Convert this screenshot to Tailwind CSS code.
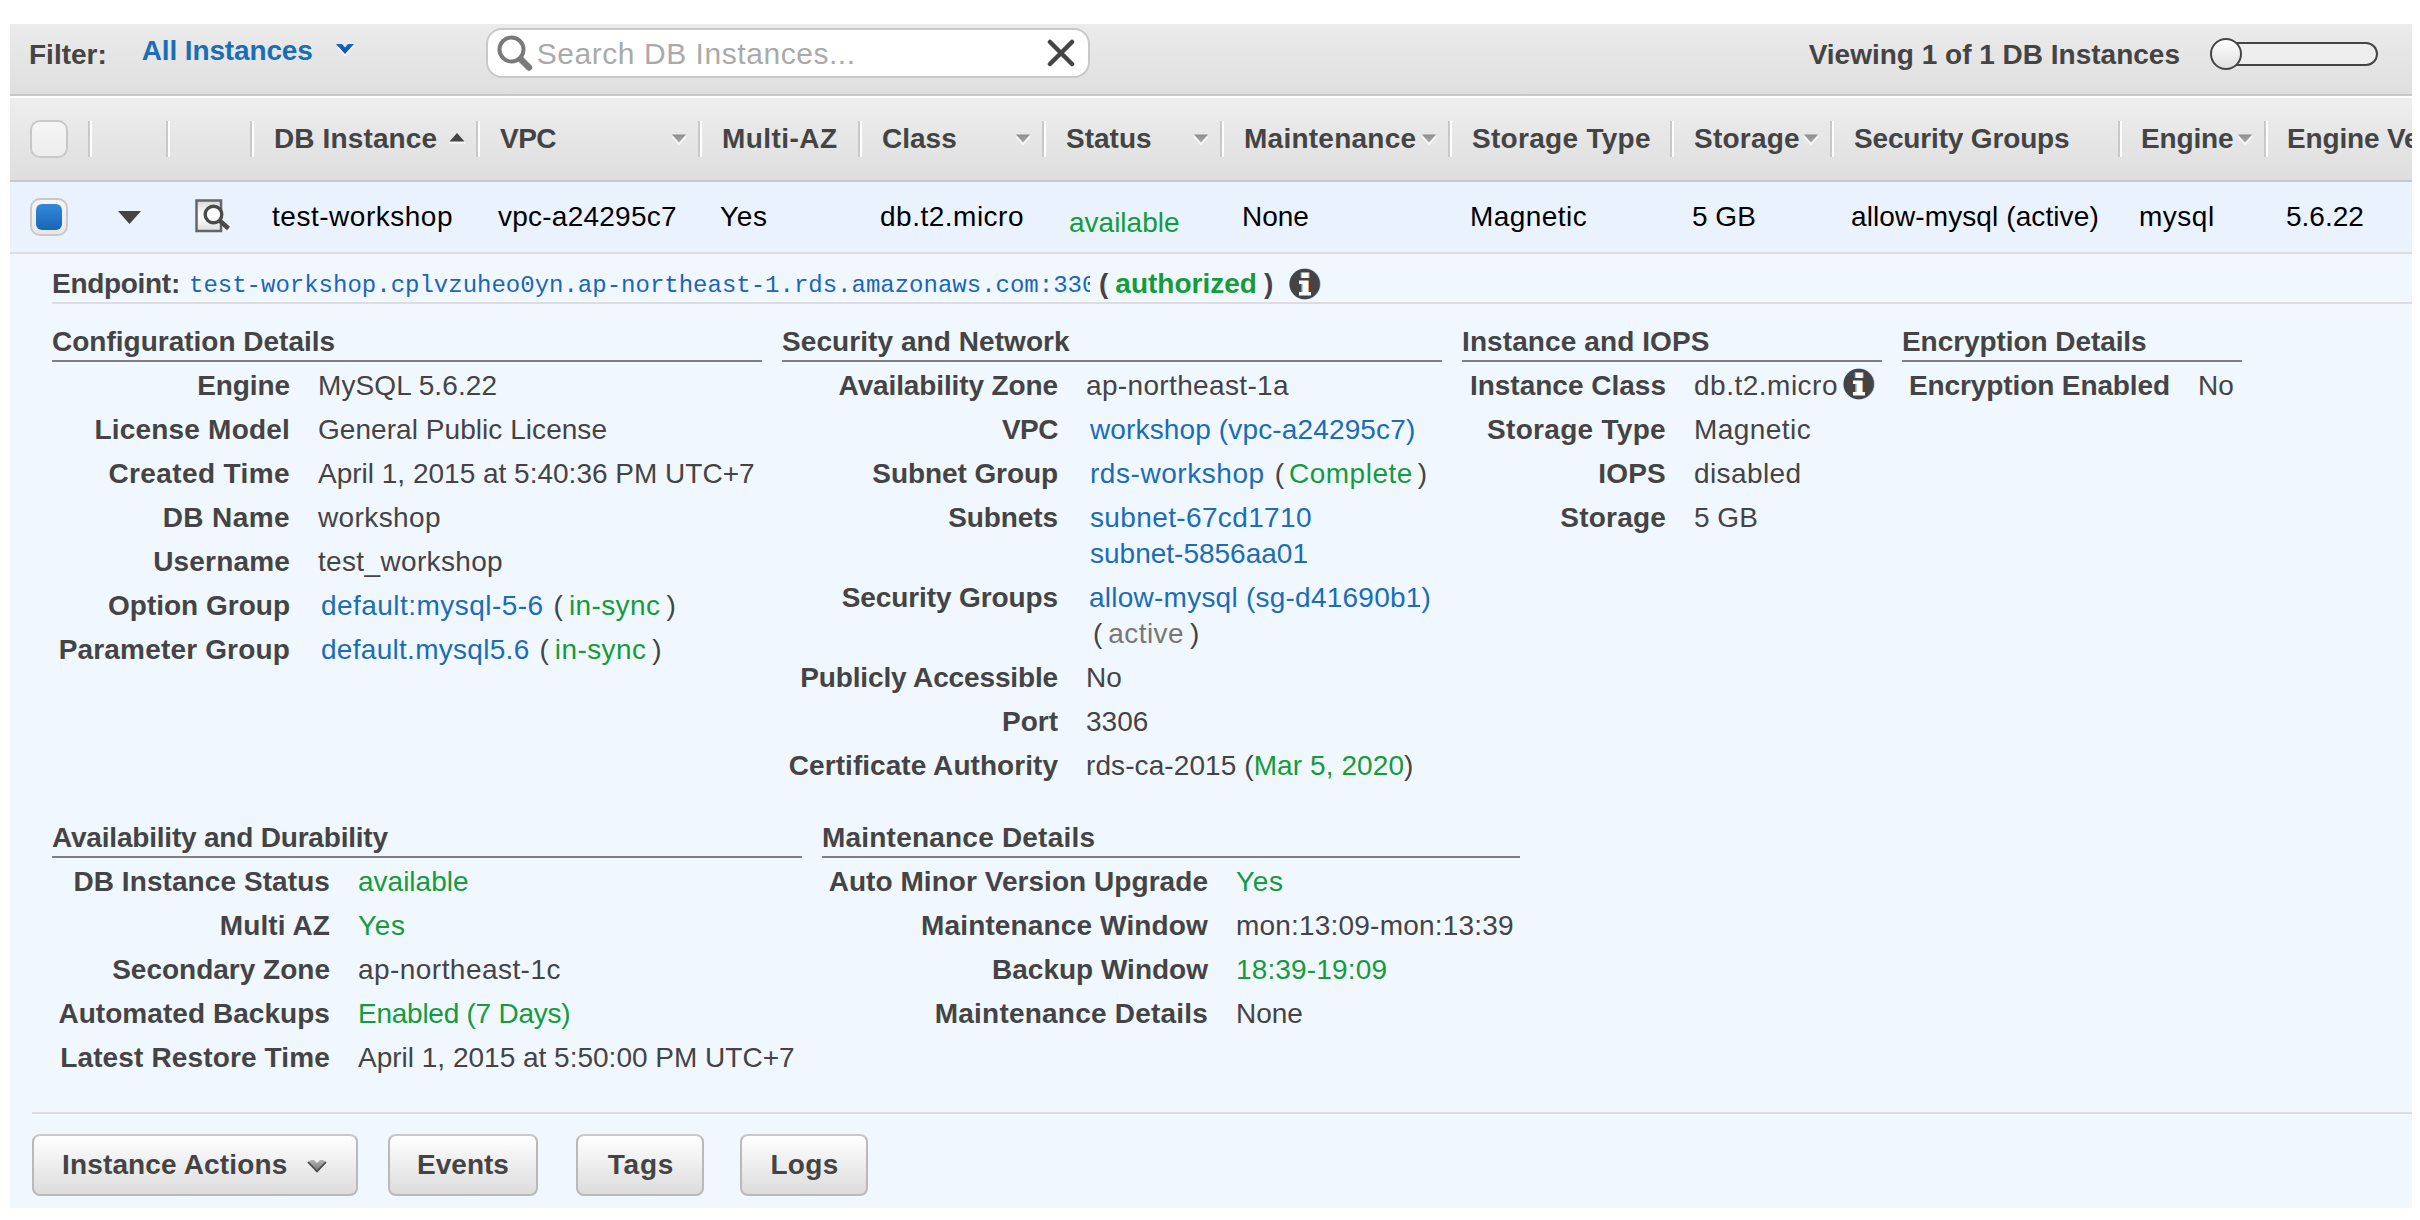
<!DOCTYPE html>
<html lang="en">
<head>
<meta charset="utf-8">
<title>DB Instances</title>
<script src="https://cdn.jsdelivr.net/npm/@tailwindcss/browser@4"></script>
</head>
<body class="bg-white overflow-hidden">
<svg class="absolute h-0 w-0">
  <defs>
    <linearGradient id="sortFill" x1="0" y1="0" x2="0" y2="1"><stop offset="0" stop-color="#8c8c8c"/><stop offset="1" stop-color="#a8a8a8"/></linearGradient>
    <linearGradient id="chevFill" x1="0" y1="0" x2="0" y2="1"><stop offset="0" stop-color="#b5b5b5"/><stop offset="1" stop-color="#6e6e6e"/></linearGradient>
    <linearGradient id="chevBlue" x1="0" y1="0" x2="0" y2="1"><stop offset="0" stop-color="#1467c4"/><stop offset="1" stop-color="#0a50b4"/></linearGradient>
    <linearGradient id="pageFill" x1="0" y1="0" x2="0" y2="1"><stop offset="0" stop-color="#d8d8d8"/><stop offset="0.5" stop-color="#ffffff"/><stop offset="1" stop-color="#dedede"/></linearGradient>
  </defs>
  <symbol id="sort" viewBox="0 0 16 12">
    <path d="M1 3.5 8 11 15 3.5" fill="none" stroke="#fafafa" stroke-width="1.600"/>
    <path d="M1 1.5H15L8 9.5Z" fill="url(#sortFill)"/>
  </symbol>
  <symbol id="info" viewBox="0 0 32 32">
    <circle cx="16" cy="16" r="15.6" fill="#8fb8e8"/>
    <circle cx="15.7" cy="16" r="15.2" fill="#444444"/>
    <path d="M12 4.5h8v5.500h-8zM10 12.500h9.500v11.500h2.500v3.500H10v-3.500h2.500v-8H10z" fill="#ffffff"/>
    <path d="M12 4.500v5.500M13 16v8" stroke="#4a90e2" stroke-width="1" fill="none"/>
    <path d="M20 4.500v5.500M19.500 13v11" stroke="#f0a560" stroke-width="1" fill="none"/>
  </symbol>
</svg>

<main class="ml-[10px] mt-6 flex h-[1184px] w-[2402px] flex-col overflow-hidden bg-[#f0f7ff] font-['Liberation_Sans',Arial,sans-serif] text-[28px] leading-9 whitespace-nowrap text-[#444]">

  <!-- Filter bar -->
  <header class="flex h-[72px] shrink-0 items-start border-b-2 border-[#c8c8c8] bg-linear-to-b from-[#ebebeb] to-[#dfdfdf]">
    <span class="mt-[13px] ml-[19px] font-bold">Filter:</span>
    <a class="mt-[9px] ml-[35px] font-bold tracking-[-0.14px] text-[#1b6db5]">All Instances</a>
    <svg class="mt-[19px] ml-[22px] h-[14px] w-5" viewBox="0 0 20 14"><path d="M1 3H7L10 6.500 13 3H19L10 13.500Z" fill="#fff"/><path d="M1 1H7L10 4.500 13 1H19L10 11Z" fill="url(#chevBlue)"/></svg>
    <div class="mt-1 ml-[131px] flex h-[50px] w-[604px] items-center rounded-[16px] border-2 border-[#c8c8c8] bg-white">
      <svg class="ml-[9px] h-9 w-9" viewBox="0 0 36 36" fill="none" stroke="#7a7a7a"><circle cx="14.500" cy="14.500" r="12" stroke-width="4"/><path d="M24 24.500 32 32.500" stroke-width="6.500" stroke-linecap="round"/></svg>
      <span class="ml-[4px] mt-[1px] text-[30px] tracking-[0.55px] text-[#aaa]">Search DB Instances...</span>
      <svg class="mr-[13px] ml-auto h-7 w-7" viewBox="0 0 28 28"><path d="M3 3 25 25M25 3 3 25" stroke="#444" stroke-width="4.500" stroke-linecap="round"/></svg>
    </div>
    <span class="mt-[13px] ml-auto font-bold">Viewing 1 of 1 DB Instances</span>
    <div class="mt-[14px] mr-[34px] ml-[30px] flex h-8 w-[168px] items-center">
      <span class="z-10 h-8 w-8 shrink-0 rounded-full border-2 border-[#444] bg-linear-to-b from-white to-[#e0e0e0]"></span>
      <span class="-ml-4 h-6 grow rounded-r-full border-2 border-[#444] bg-[#eeeeee]"></span>
    </div>
  </header>

  <!-- Column headings -->
  <div class="grid h-[86px] shrink-0 grid-cols-[78px_78px_84px_226px_222px_160px_184px_178px_228px_222px_160px_288px_146px_148px] items-center border-t-2 border-b-2 border-t-white border-b-[#c8c8c8] bg-linear-to-b from-[#eeeeee] to-[#dedede] font-bold">
    <div class="pl-5"><span class="block h-[38px] w-[38px] rounded-[10px] border-2 border-[#c8c8c8] bg-linear-to-b from-[#f6f6f6] to-[#ededed]"></span></div>
    <div class="flex h-9 border-l-2 border-[#c8c8c8]"><i class="w-[2px] bg-white"></i></div>
    <div class="flex h-9 border-l-2 border-[#c8c8c8]"><i class="w-[2px] bg-white"></i></div>
    <div class="flex h-9 border-l-2 border-[#c8c8c8]"><i class="w-[2px] bg-white"></i><span class="pl-[20px] tracking-[0.13px]">DB Instance</span><svg class="mt-[11px] mr-[11px] ml-auto h-3 w-4" viewBox="0 0 16 12"><path d="M0 9.500H16V11.500H0Z" fill="#fafafa"/><path d="M0.500 9.500 8 1 15.500 9.500Z" fill="#444"/></svg></div>
    <div class="flex h-9 border-l-2 border-[#c8c8c8]"><i class="w-[2px] bg-white"></i><span class="pl-5 tracking-[-0.5px]">VPC</span><svg class="mt-[12px] mr-[11px] ml-auto h-3 w-4"><use href="#sort"/></svg></div>
    <div class="flex h-9 border-l-2 border-[#c8c8c8]"><i class="w-[2px] bg-white"></i><span class="pl-[20px] tracking-[0.45px]">Multi-AZ</span></div>
    <div class="flex h-9 border-l-2 border-[#c8c8c8]"><i class="w-[2px] bg-white"></i><span class="pl-[20px]">Class</span><svg class="mt-[12px] mr-[11px] ml-auto h-3 w-4"><use href="#sort"/></svg></div>
    <div class="flex h-9 border-l-2 border-[#c8c8c8]"><i class="w-[2px] bg-white"></i><span class="pl-[20px]">Status</span><svg class="mt-[12px] mr-[11px] ml-auto h-3 w-4"><use href="#sort"/></svg></div>
    <div class="flex h-9 border-l-2 border-[#c8c8c8]"><i class="w-[2px] bg-white"></i><span class="pl-[20px] tracking-[0.25px]">Maintenance</span><svg class="mt-[12px] mr-[11px] ml-auto h-3 w-4"><use href="#sort"/></svg></div>
    <div class="flex h-9 border-l-2 border-[#c8c8c8]"><i class="w-[2px] bg-white"></i><span class="pl-[20px] tracking-[0.3px]">Storage Type</span></div>
    <div class="flex h-9 border-l-2 border-[#c8c8c8]"><i class="w-[2px] bg-white"></i><span class="pl-[20px] tracking-[0.22px]">Storage</span><svg class="mt-[12px] mr-[11px] ml-auto h-3 w-4"><use href="#sort"/></svg></div>
    <div class="flex h-9 border-l-2 border-[#c8c8c8]"><i class="w-[2px] bg-white"></i><span class="pl-[20px] tracking-[-0.16px]">Security Groups</span></div>
    <div class="flex h-9 border-l-2 border-[#c8c8c8]"><i class="w-[2px] bg-white"></i><span class="pl-[19px] tracking-[-0.15px]">Engine</span><svg class="mt-[12px] mr-[11px] ml-auto h-3 w-4"><use href="#sort"/></svg></div>
    <div class="flex h-9 overflow-hidden border-l-2 border-[#c8c8c8]"><i class="w-[2px] shrink-0 bg-white"></i><span class="pl-[19px] tracking-[-0.15px]">Engine Version</span></div>
  </div>

  <!-- Selected instance -->
  <div class="grid h-[72px] shrink-0 grid-cols-[78px_78px_84px_226px_222px_160px_184px_178px_228px_222px_160px_288px_146px_148px] items-center border-b-2 border-[#dddddd] bg-[#eaf2fe] text-black">
    <div class="pl-5"><span class="flex h-[38px] w-[38px] items-center justify-center rounded-[10px] border-2 border-[#c8c8c8] bg-linear-to-b from-[#f6f6f6] to-[#e8e8e8]"><i class="h-[26px] w-[26px] rounded-[6px] bg-linear-to-b from-[#3389da] to-[#1766b8]"></i></span></div>
    <div class="pl-[30px]"><svg class="h-[14px] w-[23px]" viewBox="0 0 23 14"><path d="M0 1H23L11.500 14Z" fill="#444"/></svg></div>
    <div class="pl-[29px]"><svg class="-mt-0.5 h-[34px] w-9" viewBox="0 0 36 34"><rect x="1.500" y="1.500" width="24.500" height="30.500" fill="url(#pageFill)" stroke="#666" stroke-width="2.500"/><path d="M24.500 21.500 33.500 29.500" stroke="#4a4a4a" stroke-width="4.500"/><circle cx="18.500" cy="15.500" r="8.300" fill="#fff" stroke="#4a4a4a" stroke-width="3.400"/></svg></div>
    <div class="pl-[22px] tracking-[0.52px]">test-workshop</div>
    <div class="pl-[22px] tracking-[0.24px]">vpc-a24295c7</div>
    <div class="pl-[22px] tracking-[0.7px]">Yes</div>
    <div class="pl-[22px] tracking-[0.5px]">db.t2.micro</div>
    <div class="pt-3 pl-[27px] text-[#169b3b]">available</div>
    <div class="pl-[22px]">None</div>
    <div class="pl-[22px] tracking-[0.45px]">Magnetic</div>
    <div class="pl-[22px]">5 GB</div>
    <div class="pl-[21px] tracking-[0.1px]">allow-mysql (active)</div>
    <div class="pl-[21px] tracking-[0.5px]">mysql</div>
    <div class="pl-[22px]">5.6.22</div>
  </div>

  <!-- Endpoint -->
  <div class="ml-[42px] flex h-[50px] shrink-0 border-b-2 border-[#dddddd] pt-3 font-bold">
    <span class="w-[137px] tracking-[-0.3px]">Endpoint:</span>
    <span class="w-[901px] overflow-hidden pt-px font-['Liberation_Mono','Courier_New',monospace] text-2xl leading-[37px] font-normal text-[#1a66b8]">test-workshop.cplvzuheo0yn.ap-northeast-1.rds.amazonaws.com:3306</span>
    <span class="ml-[9px]">(</span><span class="mx-[7px] text-[#169b3b]">authorized</span><span>)</span>
    <svg class="mt-[2px] ml-4 h-8 w-8"><use href="#info"/></svg>
  </div>

  <!-- Detail sections -->
  <div class="mt-5 ml-[42px] flex h-[496px] shrink-0 items-start gap-5">
    <section class="w-[710px]">
      <h2 class="mb-[2px] border-b-2 border-[#808080] font-bold">Configuration Details</h2>
      <dl class="grid grid-cols-[238px_auto] gap-x-7 gap-y-2 pt-1">
        <dt class="text-right font-bold tracking-[-0.1px]">Engine</dt><dd class="tracking-[0.1px]">MySQL 5.6.22</dd>
        <dt class="text-right font-bold tracking-[0.2px]">License Model</dt><dd class="tracking-[0.05px]">General Public License</dd>
        <dt class="text-right font-bold tracking-[0.39px]">Created Time</dt><dd>April 1, 2015 at 5:40:36 PM UTC+7</dd>
        <dt class="text-right font-bold tracking-[0.4px]">DB Name</dt><dd class="tracking-[0.39px]">workshop</dd>
        <dt class="text-right font-bold tracking-[0.17px]">Username</dt><dd class="tracking-[0.34px]">test_workshop</dd>
        <dt class="text-right font-bold">Option Group</dt><dd class="pl-[3px]"><a class="tracking-[0.46px] text-[#1b6db5]">default:mysql-5-6</a><span class="ml-[10px]">(</span><span class="mx-[6px] tracking-[0.4px] text-[#169b3b]">in-sync</span>)</dd>
        <dt class="text-right font-bold tracking-[0.17px]">Parameter Group</dt><dd class="pl-[3px]"><a class="tracking-[0.29px] text-[#1b6db5]">default.mysql5.6</a><span class="ml-[10px]">(</span><span class="mx-[6px] tracking-[0.4px] text-[#169b3b]">in-sync</span>)</dd>
      </dl>
    </section>
    <section class="w-[660px]">
      <h2 class="mb-[2px] border-b-2 border-[#808080] font-bold tracking-[0.07px]">Security and Network</h2>
      <dl class="grid grid-cols-[276px_auto] gap-x-7 gap-y-2 pt-1">
        <dt class="text-right font-bold tracking-[-0.12px]">Availability Zone</dt><dd class="tracking-[0.35px]">ap-northeast-1a</dd>
        <dt class="text-right font-bold tracking-[-0.5px]">VPC</dt><dd class="pl-1 tracking-[0.14px] text-[#1b6db5]">workshop (vpc-a24295c7)</dd>
        <dt class="text-right font-bold tracking-[-0.08px]">Subnet Group</dt><dd class="pl-1"><a class="tracking-[0.55px] text-[#1b6db5]">rds-workshop</a><span class="ml-[10px]">(</span><span class="mx-[5px] tracking-[0.5px] text-[#169b3b]">Complete</span>)</dd>
        <dt class="text-right font-bold tracking-[-0.1px]">Subnets</dt><dd class="pl-1 text-[#1b6db5]"><div class="tracking-[0.37px]">subnet-67cd1710</div><div>subnet-5856aa01</div></dd>
        <dt class="text-right font-bold tracking-[-0.1px]">Security Groups</dt><dd class="pl-[3px]"><div class="tracking-[0.24px] text-[#1b6db5]">allow-mysql (sg-d41690b1)</div><div class="pl-1">(<span class="mx-[6px] tracking-[0.4px] text-[#777]">active</span>)</div></dd>
        <dt class="text-right font-bold tracking-[-0.14px]">Publicly Accessible</dt><dd>No</dd>
        <dt class="text-right font-bold">Port</dt><dd>3306</dd>
        <dt class="text-right font-bold tracking-[0.05px]">Certificate Authority</dt><dd class="tracking-[0.09px]">rds-ca-2015 (<span class="text-[#169b3b]">Mar 5, 2020</span>)</dd>
      </dl>
    </section>
    <section class="w-[420px]">
      <h2 class="mb-[2px] border-b-2 border-[#808080] font-bold tracking-[0.1px]">Instance and IOPS</h2>
      <dl class="grid grid-cols-[204px_auto] gap-x-7 gap-y-2 pt-1">
        <dt class="text-right font-bold">Instance Class</dt><dd class="flex tracking-[0.5px]">db.t2.micro<svg class="ml-[5px] h-8 w-8"><use href="#info"/></svg></dd>
        <dt class="text-right font-bold tracking-[0.3px]">Storage Type</dt><dd class="tracking-[0.45px]">Magnetic</dd>
        <dt class="text-right font-bold tracking-[0.2px]">IOPS</dt><dd class="tracking-[0.4px]">disabled</dd>
        <dt class="text-right font-bold tracking-[0.2px]">Storage</dt><dd>5 GB</dd>
      </dl>
    </section>
    <section class="w-[340px]">
      <h2 class="mb-[2px] border-b-2 border-[#808080] font-bold tracking-[-0.07px]">Encryption Details</h2>
      <dl class="grid grid-cols-[268px_auto] gap-x-7 gap-y-2 pt-1">
        <dt class="text-right font-bold tracking-[-0.11px]">Encryption Enabled</dt><dd>No</dd>
      </dl>
    </section>
  </div>

  <div class="ml-[42px] flex h-[292px] shrink-0 items-start gap-5">
    <section class="w-[750px]">
      <h2 class="mb-[2px] border-b-2 border-[#808080] font-bold tracking-[-0.2px]">Availability and Durability</h2>
      <dl class="grid grid-cols-[278px_auto] gap-x-7 gap-y-2 pt-1">
        <dt class="text-right font-bold tracking-[0.08px]">DB Instance Status</dt><dd class="text-[#169b3b]">available</dd>
        <dt class="text-right font-bold tracking-[0.1px]">Multi AZ</dt><dd class="tracking-[0.7px] text-[#169b3b]">Yes</dd>
        <dt class="text-right font-bold">Secondary Zone</dt><dd class="tracking-[0.45px]">ap-northeast-1c</dd>
        <dt class="text-right font-bold tracking-[0.05px]">Automated Backups</dt><dd class="tracking-[-0.25px] text-[#169b3b]">Enabled (7 Days)</dd>
        <dt class="text-right font-bold tracking-[0.14px]">Latest Restore Time</dt><dd>April 1, 2015 at 5:50:00 PM UTC+7</dd>
      </dl>
    </section>
    <section class="w-[698px]">
      <h2 class="mb-[2px] border-b-2 border-[#808080] font-bold tracking-[0.21px]">Maintenance Details</h2>
      <dl class="grid grid-cols-[386px_auto] gap-x-7 gap-y-2 pt-1">
        <dt class="text-right font-bold tracking-[0.05px]">Auto Minor Version Upgrade</dt><dd class="tracking-[0.7px] text-[#169b3b]">Yes</dd>
        <dt class="text-right font-bold tracking-[0.14px]">Maintenance Window</dt><dd class="tracking-[0.2px]">mon:13:09-mon:13:39</dd>
        <dt class="text-right font-bold">Backup Window</dt><dd class="tracking-[0.15px] text-[#169b3b]">18:39-19:09</dd>
        <dt class="text-right font-bold tracking-[0.21px]">Maintenance Details</dt><dd>None</dd>
      </dl>
    </section>
  </div>

  <!-- Actions -->
  <footer class="ml-[22px] flex grow items-start border-t-2 border-[#dddddd] pt-5 font-bold text-shadow-[0_2px_1px_#ffffff]">
    <button class="flex h-[62px] w-[326px] items-center rounded-[8px] border-2 border-[#b9b9b9] border-t-[#c8c8c8] bg-linear-to-b from-white to-[#dcdcdc] pl-7 tracking-[0.15px]">Instance Actions<svg class="mt-1 ml-5 h-4 w-5" viewBox="0 0 20 16"><path d="M1 3 4 1H7L10 4 13 1H16L19 3 10 13Z" fill="url(#chevFill)"/><path d="M1 3 10 12.500 19 3" fill="none" stroke="#4a4a4a" stroke-width="1.800"/></svg></button>
    <button class="ml-[30px] h-[62px] w-[150px] rounded-[8px] border-2 border-[#b9b9b9] border-t-[#c8c8c8] bg-linear-to-b from-white to-[#dcdcdc]">Events</button>
    <button class="ml-[38px] h-[62px] w-32 rounded-[8px] border-2 border-[#b9b9b9] border-t-[#c8c8c8] bg-linear-to-b from-white to-[#dcdcdc] pl-[2px] tracking-[0.8px]">Tags</button>
    <button class="ml-9 h-[62px] w-32 rounded-[8px] border-2 border-[#b9b9b9] border-t-[#c8c8c8] bg-linear-to-b from-white to-[#dcdcdc] pl-px tracking-[0.3px]">Logs</button>
  </footer>
</main>
</body>
</html>
